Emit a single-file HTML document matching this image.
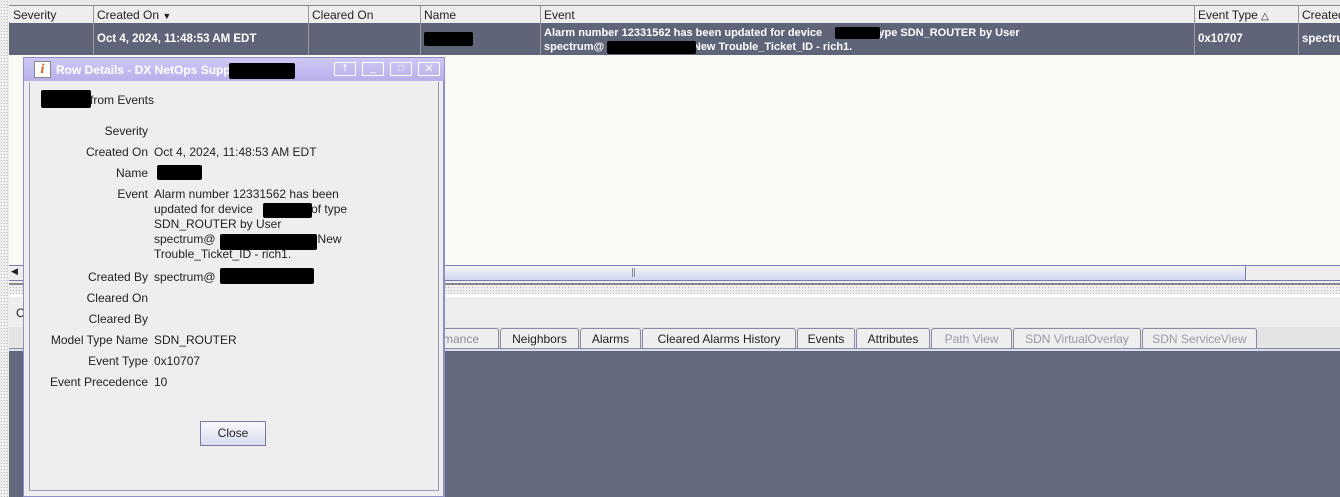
<!DOCTYPE html><html><head><style>
*{margin:0;padding:0;box-sizing:border-box}
body{width:1340px;height:497px;overflow:hidden;position:relative;background:#eeeeee;font-family:"Liberation Sans",sans-serif;font-size:12px;color:#222}
.a{position:absolute}
.blk{position:absolute;background:#000;border-radius:2px}
.dots{background-image:radial-gradient(#b8b8b8 0.6px,transparent 0.8px);background-size:3px 3px}
.hc{position:absolute;top:6px;height:17px;border-right:1px solid #999;padding:2px 3px;font-size:12px;color:#222;background:#eeeeee}
.rc{position:absolute;top:23px;height:32px;border-right:1px solid #9a9a9a;color:#fff;font-weight:bold;font-size:11.5px;padding:0 3px;display:flex;align-items:center}
.tab{position:absolute;top:328px;height:20px;border:1px solid #8a8aa0;border-bottom:none;background:#eeeeee;font-size:12px;padding:3px 0 0;text-align:center;border-radius:3px 3px 0 0}
.dis{color:#9a9aa8}
.lb{position:absolute;right:0;width:122px;text-align:right}
.row{position:absolute;left:24px;width:400px;height:16px}
.row .lb{left:0;right:auto;width:124px}
.row .v{position:absolute;left:130px}
</style></head><body>
<div class="a dots" style="left:0;top:0;width:9px;height:497px"></div>
<div class="a" style="left:9px;top:0;width:1331px;height:6px;background:#e8e8e8;border-bottom:1px solid #888"></div>
<div class="a" style="left:9px;top:6px;width:1331px;height:17px;background:#eeeeee;border-bottom:1px solid #999"></div>
<div class="hc" style="left:10px;width:84px">Severity</div>
<div class="hc" style="left:94px;width:215px">Created On <span style="font-size:9px">&#9660;</span></div>
<div class="hc" style="left:309px;width:112px">Cleared On</div>
<div class="hc" style="left:421px;width:120px">Name</div>
<div class="hc" style="left:541px;width:654px">Event</div>
<div class="hc" style="left:1195px;width:104px">Event Type <span style="font-size:10px">&#9651;</span></div>
<div class="hc" style="left:1299px;width:41px;border-right:none">Created</div>
<div class="a" style="left:9px;top:23px;width:1331px;height:32px;background:#5f6478"></div>
<div class="rc" style="left:10px;width:84px"></div>
<div class="rc" style="left:94px;width:215px">Oct 4, 2024, 11:48:53 AM EDT</div>
<div class="rc" style="left:309px;width:112px"></div>
<div class="rc" style="left:421px;width:120px"></div>
<div class="blk" style="left:424px;top:32px;width:49px;height:14px"></div>
<div class="rc" style="left:541px;width:654px;display:block;padding-top:3px;line-height:14px;font-size:11px">Alarm number 12331562 has been updated for device &nbsp; &nbsp; &nbsp; &nbsp; &nbsp; &nbsp; &nbsp; f type SDN_ROUTER by User<br>spectrum@ &nbsp; &nbsp; &nbsp; &nbsp; &nbsp; &nbsp; &nbsp; &nbsp; &nbsp; &nbsp; &nbsp; &nbsp; &nbsp; &nbsp; New Trouble_Ticket_ID - rich1.</div>
<div class="blk" style="left:835px;top:27px;width:45px;height:12px"></div>
<div class="blk" style="left:607px;top:41px;width:89px;height:13px"></div>
<div class="rc" style="left:1195px;width:104px">0x10707</div>
<div class="rc" style="left:1299px;width:41px;border:none">spectru</div>
<div class="a" style="left:9px;top:55px;width:1331px;height:210px;background:#fbfbf6"></div>
<div class="a" style="left:9px;top:265px;width:1331px;height:16px;background:#eeeeee;border-top:1px solid #7a7ab0;border-bottom:1px solid #7a7ab0"></div>
<div class="a" style="left:424px;top:266px;width:822px;height:14px;background:linear-gradient(#f4f6fc,#cfd6ee);border-right:1px solid #7a7ab0"></div>
<div class="a" style="left:632px;top:268px;width:3px;height:9px;border-left:1px solid #889;border-right:1px solid #889"></div>
<div class="a" style="left:11px;top:266px;width:12px;height:14px;font-size:9px">&#9664;</div>
<div class="a" style="left:9px;top:283px;width:1331px;height:2px;background:#888"></div>
<div class="a dots" style="left:9px;top:286px;width:1331px;height:8px"></div>
<div class="a" style="left:9px;top:294px;width:1331px;height:3px;background:#fff"></div>
<div class="a" style="left:16px;top:306px">C</div>
<div class="a" style="left:9px;top:327px;width:1331px;height:22px;background:#e4e4e4"></div>
<div class="tab dis" style="left:420px;width:79px;border-left:none;color:#8a8aa0">rmance</div>
<div class="tab" style="left:500px;width:79px">Neighbors</div>
<div class="tab" style="left:580px;width:61px">Alarms</div>
<div class="tab" style="left:642px;width:154px">Cleared Alarms History</div>
<div class="tab" style="left:797px;width:58px">Events</div>
<div class="tab" style="left:856px;width:74px">Attributes</div>
<div class="tab dis" style="left:931px;width:81px">Path View</div>
<div class="tab dis" style="left:1013px;width:128px">SDN VirtualOverlay</div>
<div class="tab dis" style="left:1142px;width:115px">SDN ServiceView</div>
<div class="a" style="left:9px;top:348px;width:1331px;height:3px;background:#d8dcec;border-top:1px solid #8a8aa0"></div>
<div class="a" style="left:9px;top:351px;width:1331px;height:146px;background:#636a7e"></div>
<div class="a" style="left:23px;top:57px;width:422px;height:440px;background:#eeeeee;border:1px solid #8f8fc8;border-right:2px solid #8f8fc8"></div>
<div class="a" style="left:24px;top:58px;width:420px;height:23px;background:linear-gradient(#cfc8f6,#b8b0ea)"></div>
<div class="a" style="left:34px;top:61px;width:17px;height:17px;background:#fff;border:1px solid #888;font:bold italic 14px 'Liberation Serif',serif;color:#d55a10;text-align:center;line-height:15px">i</div>
<div class="a" style="left:56px;top:63px;color:#fff;font-size:12px;font-weight:bold">Row Details - DX NetOps Suppor</div>
<div class="blk" style="left:229px;top:63px;width:66px;height:16px"></div>
<div class="a" style="left:334px;top:62px;width:22px;height:14px;border:1px solid #fff;color:#fff;font-size:10px;text-align:center;line-height:12px">&#129045;</div>
<div class="a" style="left:362px;top:62px;width:22px;height:14px;border:1px solid #fff;color:#fff;font-size:10px;text-align:center;line-height:12px">_</div>
<div class="a" style="left:390px;top:62px;width:22px;height:14px;border:1px solid #fff;color:#fff;font-size:10px;text-align:center;line-height:12px">&#9633;</div>
<div class="a" style="left:418px;top:62px;width:22px;height:14px;border:1px solid #fff;color:#fff;font-size:11px;text-align:center;line-height:12px">&#10005;</div>
<div class="a" style="left:29px;top:82px;width:410px;height:409px;border:1px solid #9a9ab8;border-top:none"></div>
<div class="a" style="left:90px;top:93px">from Events</div>
<div class="blk" style="left:41px;top:90px;width:50px;height:18px"></div>
<div class="row" style="top:124px"><span class="lb">Severity</span></div>
<div class="row" style="top:145px"><span class="lb">Created On</span><span class="v">Oct 4, 2024, 11:48:53 AM EDT</span></div>
<div class="row" style="top:166px"><span class="lb">Name</span></div>
<div class="blk" style="left:157px;top:165px;width:45px;height:15px"></div>
<div class="row" style="top:187px"><span class="lb">Event</span><span class="v" style="line-height:15px;width:220px">Alarm number 12331562 has been<br>updated for device <span style="display:inline-block;width:55px"></span>of type<br>SDN_ROUTER by User<br>spectrum@<span style="display:inline-block;width:102px"></span>New<br>Trouble_Ticket_ID - rich1.</span></div>
<div class="blk" style="left:263px;top:203px;width:49px;height:15px"></div>
<div class="blk" style="left:220px;top:234px;width:97px;height:16px"></div>
<div class="row" style="top:270px"><span class="lb">Created By</span><span class="v">spectrum@</span></div>
<div class="blk" style="left:220px;top:268px;width:94px;height:16px"></div>
<div class="row" style="top:291px"><span class="lb">Cleared On</span></div>
<div class="row" style="top:312px"><span class="lb">Cleared By</span></div>
<div class="row" style="top:333px"><span class="lb">Model Type Name</span><span class="v">SDN_ROUTER</span></div>
<div class="row" style="top:354px"><span class="lb">Event Type</span><span class="v">0x10707</span></div>
<div class="row" style="top:375px"><span class="lb">Event Precedence</span><span class="v">10</span></div>
<div class="a" style="left:200px;top:421px;width:66px;height:25px;border:1px solid #7a7aa0;background:linear-gradient(#f8f8fc,#d8dcee);text-align:center;line-height:23px">Close</div>
</body></html>
